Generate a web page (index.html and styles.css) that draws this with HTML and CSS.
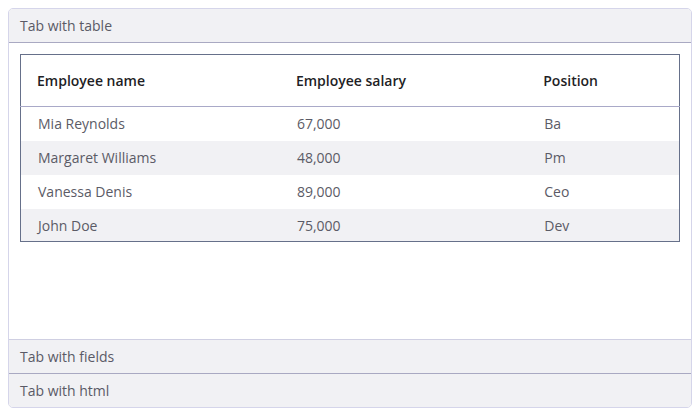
FILE: index.html
```html
<!DOCTYPE html>
<html>
<head>
<meta charset="utf-8">
<link rel="stylesheet" href="styles.css">
</head>
<body>
<div class="accordion">
  <div class="tab-head tab-head-first">Tab with table</div>
  <div class="tab-body">
    <table class="grid">
      <colgroup><col class="c1"><col class="c2"><col class="c3"></colgroup>
      <thead>
        <tr><th>Employee name</th><th>Employee salary</th><th>Position</th></tr>
      </thead>
      <tbody>
        <tr><td>Mia Reynolds</td><td>67,000</td><td>Ba</td></tr>
        <tr class="alt"><td>Margaret Williams</td><td>48,000</td><td>Pm</td></tr>
        <tr><td>Vanessa Denis</td><td>89,000</td><td>Ceo</td></tr>
        <tr class="alt last"><td>John Doe</td><td>75,000</td><td>Dev</td></tr>
      </tbody>
    </table>
  </div>
  <div class="tab-head tab-head-mid">Tab with fields</div>
  <div class="tab-head tab-head-last">Tab with html</div>
</div>
</body>
</html>
```
FILE: styles.css
```css
html, body {
  margin: 0;
  padding: 0;
  background: #fff;
}
body {
  padding: 8px;
  font-family: "Open Sans", "Liberation Sans", sans-serif;
  font-size: 14px;
}
.accordion {
  width: 684px;
  height: 400px;
  box-sizing: border-box;
  border: 1px solid #d5d5ea;
  border-radius: 5px;
  display: flex;
  flex-direction: column;
  overflow: hidden;
}
.tab-head {
  height: 33px;
  line-height: 33px;
  padding-left: 11px;
  background: #f1f1f4;
  color: #5a5a66;
  flex: none;
}
.tab-head-first {
  border-bottom: 1px solid #a9a9c2;
}
.tab-head-mid {
  border-top: 1px solid #cfcfe2;
  border-bottom: 1px solid #a9a9c2;
}
.tab-body {
  flex: 1;
  padding: 11px;
  background: #fff;
}
.grid {
  width: 660px;
  border-collapse: collapse;
  border: 1px solid #66708a;
  table-layout: fixed;
}
.c1 { width: 259px; }
.c2 { width: 247px; }
.c3 { width: 152px; }
.grid th {
  text-align: left;
  font-weight: 600;
  color: #1f1f26;
  height: 51px;
  padding: 0 0 0 16px;
  border-bottom: 1px solid #a9a9c8;
}
.grid td {
  height: 32px;
  padding: 0 0 2px 17px;
  color: #5b5b66;
}
.grid tr.alt td {
  background: #f1f1f4;
}
.grid tr.last td {
  height: 32px;
  padding-bottom: 0;
}
```
